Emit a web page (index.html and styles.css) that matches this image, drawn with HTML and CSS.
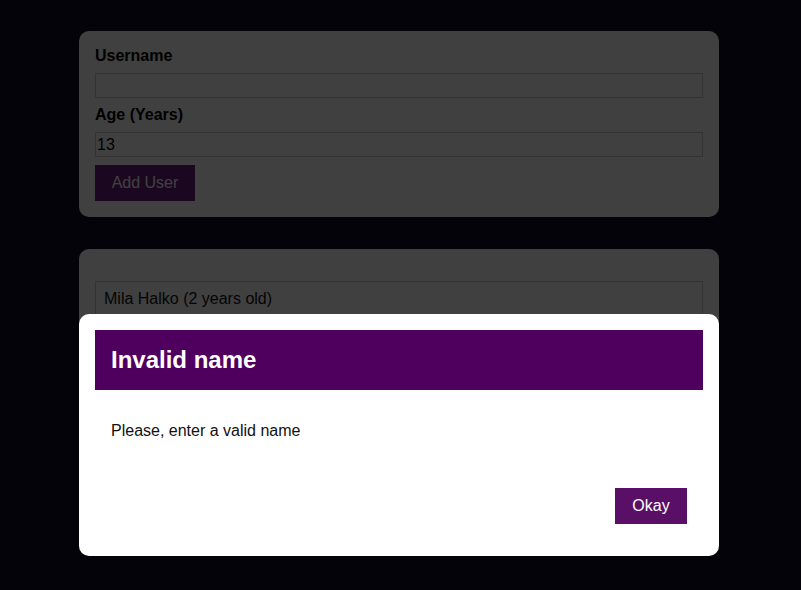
FILE: index.html
```html
<!DOCTYPE html>
<html lang="en">
<head>
<meta charset="utf-8">
<title>Users</title>
<link rel="stylesheet" href="styles.css">
</head>
<body>
<main class="page">
  <section class="card form-card">
    <form class="user-form">
      <label class="label" for="username">Username</label>
      <input class="input" id="username" type="text" value="">
      <label class="label" for="age">Age (Years)</label>
      <input class="input" id="age" type="number" value="13">
      <div class="actions">
        <button type="button" class="btn btn-add">Add User</button>
      </div>
    </form>
  </section>
  <section class="card list-card">
    <ul class="users">
      <li class="user">Mila Halko (2 years old)</li>
    </ul>
  </section>
</main>
<div class="backdrop"></div>
<div class="modal" role="dialog">
  <header class="modal-header"><h2 class="modal-title">Invalid name</h2></header>
  <div class="modal-content"><p class="modal-text">Please, enter a valid name</p></div>
  <footer class="modal-footer"><button type="button" class="btn btn-okay">Okay</button></footer>
</div>
</body>
</html>
```

FILE: styles.css
```css
* { box-sizing: border-box; }
html, body { margin: 0; padding: 0; }
body {
  background: #120e2a;
  font-family: "Liberation Sans", Arial, sans-serif;
  font-size: 16px;
  width: 801px;
  height: 590px;
  overflow: hidden;
}
.page {
  padding-top: 31px;
  margin-left: 79px;
  width: 640px;
}
.card {
  background: #ffffff;
  border-radius: 10px;
  padding: 16px;
}
.list-card { margin-top: 32px; }
.user-form { display: flex; flex-direction: column; }
.label {
  display: block;
  font-weight: bold;
  line-height: 18px;
  margin-bottom: 8px;
  color: #000;
}
.input {
  display: block;
  width: 100%;
  height: 25px;
  border: 1px solid #cccccc;
  padding: 0 1px;
  font: inherit;
  font-size: 16px;
  margin: 0 0 8px 0;
  color: #000;
  background: #fff;
  appearance: textfield;
  -moz-appearance: textfield;
}
.input::-webkit-inner-spin-button,
.input::-webkit-outer-spin-button { -webkit-appearance: none; margin: 0; }
.actions { display: flex; }
.btn {
  font-family: inherit;
  font-size: 16px;
  height: 36px;
  padding: 0 16px;
  border: 1px solid transparent;
  color: #fff;
  cursor: pointer;
  white-space: nowrap;
}
.btn-add { background: #701c80; border-color: #701c80; width: 100px; padding: 0; }
.users { list-style: none; margin: 16px 0 0; padding: 0; }
.user {
  border: 1px solid #cccccc;
  padding: 8px;
  line-height: 18px;
  color: #111;
}
.backdrop {
  position: fixed;
  inset: 0;
  background: rgba(0, 0, 0, 0.75);
}
.modal {
  position: fixed;
  top: 314px;
  left: 79px;
  width: 640px;
  background: #fff;
  border-radius: 10px;
  padding: 16px;
}
.modal-header {
  background: #4f005f;
  padding: 17px 16px;
}
.modal-title {
  margin: 0;
  color: #fff;
  font-size: 24px;
  line-height: 26px;
  font-weight: bold;
}
.modal-content { padding: 16px; }
.modal-text { margin: 16px 0; line-height: 18px; color: #111; }
.modal-footer {
  display: flex;
  justify-content: flex-end;
  padding: 16px;
}
.btn-okay { background: #5a0f66; border-color: #5a0f66; width: 72px; padding: 0; }
```
